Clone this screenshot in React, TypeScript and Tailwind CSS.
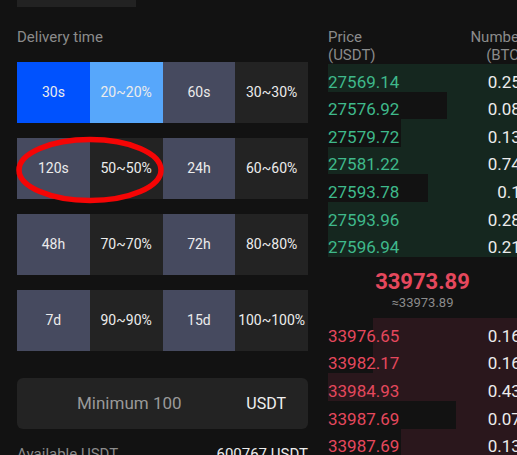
const options = [
  ["30s", "20~20%"],
  ["60s", "30~30%"],
  ["120s", "50~50%"],
  ["24h", "60~60%"],
  ["48h", "70~70%"],
  ["72h", "80~80%"],
  ["7d", "90~90%"],
  ["15d", "100~100%"],
];

const bids = [
  { price: "27569.14", qty: "0.2531", bar: 328 },
  { price: "27576.92", qty: "0.0847", bar: 447 },
  { price: "27579.72", qty: "0.1362", bar: 401 },
  { price: "27581.22", qty: "0.7418", bar: 328 },
  { price: "27593.78", qty: "0.172", bar: 428 },
  { price: "27593.96", qty: "0.2856", bar: 328 },
  { price: "27596.94", qty: "0.2143", bar: 328 },
];

const asks = [
  { price: "33976.65", qty: "0.1634", bar: 373 },
  { price: "33982.17", qty: "0.1615", bar: 373 },
  { price: "33984.93", qty: "0.4372", bar: 328 },
  { price: "33987.69", qty: "0.0758", bar: 456 },
  { price: "33987.69", qty: "0.1329", bar: 401 },
];

const Row = ({ price, qty, bar, up }: { price: string; qty: string; bar: number; up: boolean }) => (
  <div className="relative h-[27.6px] flex items-end justify-between">
    <div
      className={`absolute top-0 bottom-0 right-0 ${up ? "bg-[#15271f]" : "bg-[#2a171c]"}`}
      style={{ left: bar - 328 }}
    />
    <span className={`relative leading-[20px] text-[17px] ${up ? "text-[#3fb98b]" : "text-[#e5485d]"}`}>{price}</span>
    <span className="relative leading-[20px] text-[17px] text-[#ececec]">{qty}</span>
  </div>
);

export default function App() {
  return (
    <div className="w-[517px] h-[455px] overflow-hidden bg-[#121212] flex font-['Roboto',sans-serif]">
      <section className="w-[308px] shrink-0 pl-[17px]">
        <div className="h-[7px] w-[119px] bg-[#222222]" />
        <p className="mt-[20px] text-[15px] leading-[20px] text-[#8b8b8b]">Delivery time</p>

        <div className="relative mt-[15px] grid grid-cols-4 gap-y-[15px]">
          {options.map(([time, rate], i) => {
            const first = i === 0;
            return [
              <div
                key={time}
                className={`h-[61px] flex items-center justify-center text-[14px] text-[#ececec] ${first ? "bg-[#0052fe]" : "bg-[#464a5f]"}`}
              >
                {time}
              </div>,
              <div
                key={rate}
                className={`h-[61px] flex items-center justify-center text-[14px] text-[#ececec] ${first ? "bg-[#57a7fb]" : "bg-[#232323]"}`}
              >
                {rate}
              </div>,
            ];
          })}
          <svg className="absolute left-[-2px] top-[74px]" width="150" height="68" viewBox="0 0 150 68">
            <ellipse cx="75" cy="34" rx="71" ry="30.5" fill="none" stroke="#f50505" strokeWidth="5.5" />
          </svg>
        </div>

        <div className="mt-[27px] h-[51px] rounded-md bg-[#232323] flex items-center pl-[60px] pr-[22px]">
          <span className="flex-1 text-[17px] text-[#999999]">Minimum 100</span>
          <span className="text-[16px] text-[#f0f0f0]">USDT</span>
        </div>

        <div className="mt-[15px] flex justify-between text-[15px] leading-[20px]">
          <span className="text-[#8b8b8b]">Available USDT</span>
          <span className="text-[#ececec]">600767 USDT</span>
        </div>
      </section>

      <section className="ml-[20px] w-[212px] shrink-0 pt-[28px]">
        <div className="flex justify-between pr-[16px] text-[15px] leading-[18px] text-[#8b8b8b]">
          <div>
            <div>Price</div>
            <div>(USDT)</div>
          </div>
          <div className="text-right">
            <div>Number</div>
            <div>(BTC)</div>
          </div>
        </div>

        {bids.map((b) => (
          <Row key={b.price} {...b} up />
        ))}

        <div className="h-[61px] w-[189px] flex flex-col items-center pt-[13px]">
          <span className="text-[22px] leading-[24px] font-bold text-[#e5485d]">33973.89</span>
          <span className="text-[13px] leading-[16px] text-[#8b8b8b] mt-[1px]">≈33973.89</span>
        </div>

        {asks.map((a, i) => (
          <Row key={i} {...a} up={false} />
        ))}
      </section>
    </div>
  );
}
